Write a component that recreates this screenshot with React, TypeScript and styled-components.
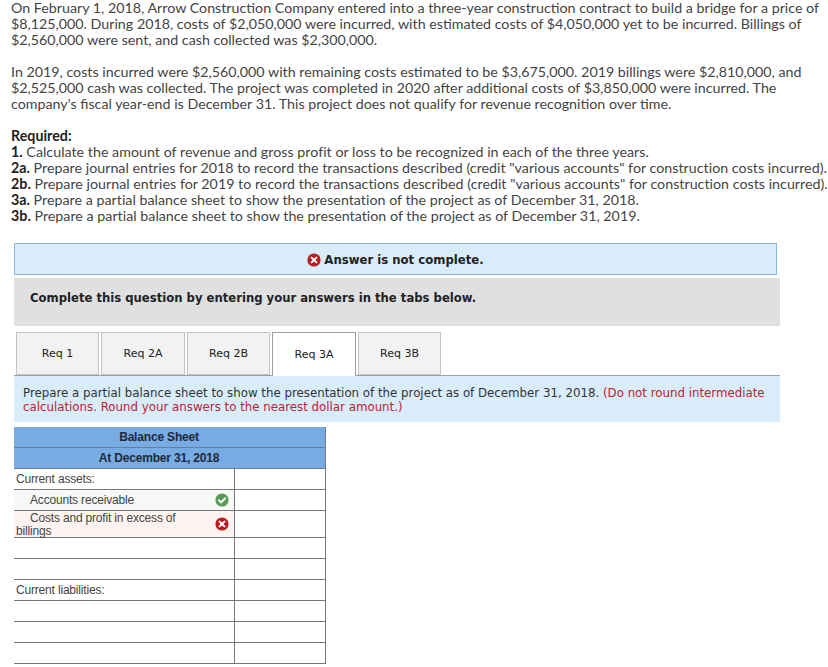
import styled, { createGlobalStyle } from "styled-components";

const Global = createGlobalStyle`
  html, body { margin: 0; padding: 0; background: #fff; }
  body { width: 828px; height: 667px; overflow: hidden; }
`;

const Page = styled.div`
  width: 828px;
  height: 667px;
  overflow: hidden;
  display: flex;
  flex-direction: column;
`;

const Question = styled.div`
  padding: 0 0 0 11px;
  font-family: Lato, "Liberation Sans", sans-serif;
  font-size: 14.25px;
  line-height: 16px;
  color: #444;
  white-space: nowrap;
`;

const Para = styled.p`
  margin: 0 0 16px;
`;

const Steps = styled.div`
  letter-spacing: 0.015px;
`;

const Strong = styled.b`
  font-weight: 700;
  color: #222;
`;

const Body = styled.div`
  margin-top: 19px;
  padding-left: 14px;
  font-family: "DejaVu Sans", Verdana, sans-serif;
`;

const Notice = styled.div`
  box-sizing: border-box;
  width: 763px;
  height: 32px;
  padding-top: 1px;
  background: #d9ecfa;
  border: 1px solid #86b8e2;
  display: flex;
  align-items: center;
  justify-content: center;
  gap: 3px;
  font-size: 11.7px;
  font-weight: 700;
  color: #222;
`;

const Prompt = styled.div`
  box-sizing: border-box;
  width: 766px;
  height: 48px;
  margin-top: 3px;
  padding: 12px 16px 0;
  background: #e0e0e0;
  font-size: 11.65px;
  line-height: 16px;
  font-weight: 700;
  color: #222;
`;

const Tabs = styled.div`
  box-sizing: border-box;
  width: 766px;
  height: 50px;
  padding: 6px 0 0 2px;
  display: flex;
  gap: 2px;
  border-bottom: 1px solid #a0a0a0;
`;

const Tab = styled.div<{ $active?: boolean; $wide?: boolean }>`
  box-sizing: border-box;
  width: ${(p) => (p.$wide ? "84px" : "83px")};
  height: ${(p) => (p.$active ? "44px" : "43px")};
  display: flex;
  align-items: center;
  justify-content: center;
  font-size: 11px;
  padding-bottom: ${(p) => (p.$active ? "1px" : "0")};
  color: #222;
  background: ${(p) => (p.$active ? "#fff" : "#f2f2f2")};
  border: 1px solid ${(p) => (p.$active ? "#a0a0a0" : "#c4c4c4")};
  border-bottom: ${(p) => (p.$active ? "none" : "1px solid #c4c4c4")};
`;

const Instructions = styled.div`
  box-sizing: border-box;
  width: 766px;
  height: 46px;
  padding: 10px 9px 0;
  background: #d9ecfa;
  font-size: 11.8px;
  line-height: 14px;
  color: #333;
  white-space: nowrap;
`;

const Red = styled.span`
  color: #c02030;
`;

const Sheet = styled.div`
  width: 311px;
  margin-top: 5px;
  font-family: "Liberation Sans", Arial, sans-serif;
  font-size: 12px;
  letter-spacing: -0.18px;
  color: #444;
  border-right: 1px solid #777;
`;

const SheetHead = styled.div`
  box-sizing: border-box;
  height: 21px;
  padding: 0 21px 1px 0;
  background: #77abe3;
  border-bottom: 1px solid #6a7f95;
  display: flex;
  align-items: center;
  justify-content: center;
  font-weight: 700;
  color: #1e2a3a;
`;

const Row = styled.div<{ $tall?: boolean }>`
  box-sizing: border-box;
  height: ${(p) => (p.$tall ? "27px" : "21px")};
  display: grid;
  grid-template-columns: 221px 1fr;
  border-bottom: 1px solid #777;
`;

const tones: Record<string, string> = {
  good: "#f6f9f5",
  bad: "#fdf4f2",
  none: "transparent",
};

const Label = styled.div<{ $tone?: string }>`
  position: relative;
  padding: 0 0 1px 2px;
  display: flex;
  align-items: center;
  background: ${(p) => tones[p.$tone ?? "none"]};
  border-right: 1px solid #777;
`;

const Indent = styled.span`
  padding-left: 14px;
`;

const Wrapped = styled.span`
  line-height: 13px;
  text-indent: 14px;
  width: 180px;
  display: block;
  margin-bottom: -2px;
`;

const Mark = styled.svg`
  position: absolute;
  right: 5px;
  top: 50%;
  width: 14px;
  height: 14px;
  margin-top: -7px;
`;

const XIcon = () => (
  <svg width="14" height="14" viewBox="0 0 14 14">
    <circle cx="7" cy="7" r="6.6" fill="#b81c22" />
    <path d="M4.6 4.6l4.8 4.8M9.4 4.6l-4.8 4.8" stroke="#fff" strokeWidth="2" strokeLinecap="round" />
  </svg>
);

const MarkGood = () => (
  <Mark viewBox="0 0 14 14">
    <circle cx="7" cy="7" r="6.6" fill="#5a9a58" />
    <path d="M3.9 7.3l2.2 2.1 4-4" fill="none" stroke="#fff" strokeWidth="2" strokeLinecap="round" strokeLinejoin="round" />
  </Mark>
);

const MarkBad = () => (
  <Mark viewBox="0 0 14 14">
    <circle cx="7" cy="7" r="6.6" fill="#b81c22" />
    <path d="M4.6 4.6l4.8 4.8M9.4 4.6l-4.8 4.8" stroke="#fff" strokeWidth="2" strokeLinecap="round" />
  </Mark>
);

export default function App() {
  return (
    <Page>
      <Global />
      <Question>
        <Para>
          On February 1, 2018, Arrow Construction Company entered into a three-year construction contract to build a bridge for a price of
          <br />
          $8,125,000. During 2018, costs of $2,050,000 were incurred, with estimated costs of $4,050,000 yet to be incurred. Billings of
          <br />
          $2,560,000 were sent, and cash collected was $2,300,000.
        </Para>
        <Para>
          In 2019, costs incurred were $2,560,000 with remaining costs estimated to be $3,675,000. 2019 billings were $2,810,000, and
          <br />
          $2,525,000 cash was collected. The project was completed in 2020 after additional costs of $3,850,000 were incurred. The
          <br />
          company's fiscal year-end is December 31. This project does not qualify for revenue recognition over time.
        </Para>
        <Steps>
          <Strong>Required:</Strong>
          <br />
          <Strong>1.</Strong> Calculate the amount of revenue and gross profit or loss to be recognized in each of the three years.
          <br />
          <Strong>2a.</Strong> Prepare journal entries for 2018 to record the transactions described (credit "various accounts" for construction costs incurred).
          <br />
          <Strong>2b.</Strong> Prepare journal entries for 2019 to record the transactions described (credit "various accounts" for construction costs incurred).
          <br />
          <Strong>3a.</Strong> Prepare a partial balance sheet to show the presentation of the project as of December 31, 2018.
          <br />
          <Strong>3b.</Strong> Prepare a partial balance sheet to show the presentation of the project as of December 31, 2019.
        </Steps>
      </Question>
      <Body>
        <Notice>
          <XIcon />
          Answer is not complete.
        </Notice>
        <Prompt>Complete this question by entering your answers in the tabs below.</Prompt>
        <Tabs>
          <Tab>Req 1</Tab>
          <Tab $wide>Req 2A</Tab>
          <Tab>Req 2B</Tab>
          <Tab $active $wide>Req 3A</Tab>
          <Tab>Req 3B</Tab>
        </Tabs>
        <Instructions>
          Prepare a partial balance sheet to show the presentation of the project as of December 31, 2018. <Red>(Do not round intermediate</Red>
          <br />
          <Red>calculations. Round your answers to the nearest dollar amount.)</Red>
        </Instructions>
        <Sheet>
          <SheetHead>Balance Sheet</SheetHead>
          <SheetHead>At December 31, 2018</SheetHead>
          <Row>
            <Label>Current assets:</Label>
            <div />
          </Row>
          <Row>
            <Label $tone="good">
              <Indent>Accounts receivable</Indent>
              <MarkGood />
            </Label>
            <div />
          </Row>
          <Row $tall>
            <Label $tone="bad">
              <Wrapped>Costs and profit in excess of billings</Wrapped>
              <MarkBad />
            </Label>
            <div />
          </Row>
          <Row>
            <Label />
            <div />
          </Row>
          <Row>
            <Label />
            <div />
          </Row>
          <Row>
            <Label>Current liabilities:</Label>
            <div />
          </Row>
          <Row>
            <Label />
            <div />
          </Row>
          <Row>
            <Label />
            <div />
          </Row>
          <Row>
            <Label />
            <div />
          </Row>
        </Sheet>
      </Body>
    </Page>
  );
}
